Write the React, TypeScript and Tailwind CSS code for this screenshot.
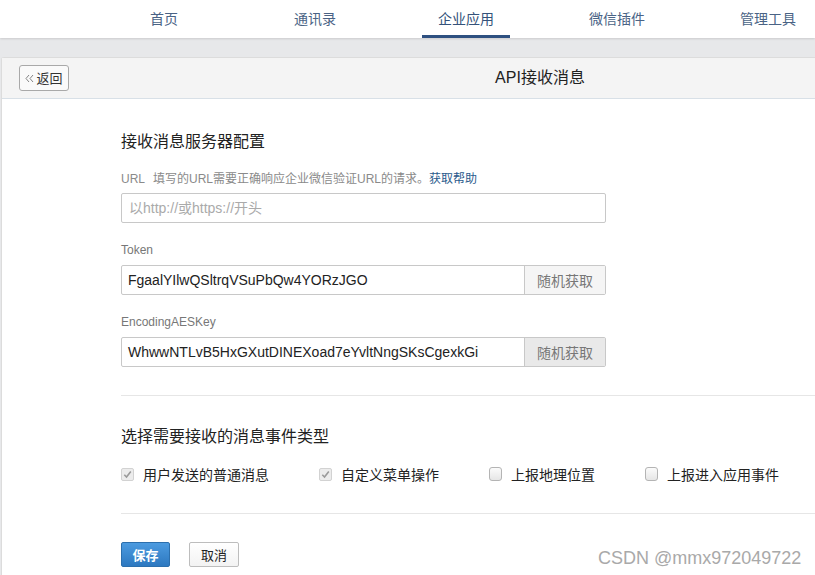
import React from "react";

const FONT = { fontFamily: '"Liberation Sans", "Noto Sans CJK SC", sans-serif' };
const CJK = { fontFamily: '"Noto Sans CJK SC", "Liberation Sans", sans-serif' };

function Check({ checked }: { checked: boolean }) {
  if (checked) {
    return (
      <span className="flex h-[13px] w-[13px] items-center justify-center rounded-[2px] border border-[#d2d2d2] bg-[#ececec]">
        <svg width="9" height="9" viewBox="0 0 9 9">
          <path d="M1.3 4.8 L3.5 7 L7.8 1.6" fill="none" stroke="#9a9a9a" strokeWidth="1.6" />
        </svg>
      </span>
    );
  }
  return (
    <span className="h-[14px] w-[13px] rounded-[3px] border border-[#b4b4b4] bg-gradient-to-b from-[#fbfbfb] to-[#e6e6e6]" />
  );
}

export default function App() {
  const tabs = ["首页", "通讯录", "企业应用", "微信插件", "管理工具"];
  const events: [string, boolean][] = [
    ["用户发送的普通消息", true],
    ["自定义菜单操作", true],
    ["上报地理位置", false],
    ["上报进入应用事件", false],
  ];
  return (
    <div className="relative h-[575px] w-[815px] overflow-hidden bg-[#e7e8ea]" style={FONT}>
      {/* top nav */}
      <div className="flex h-[38px] gap-[63px] bg-white pl-[120px] shadow-[0_1px_2px_rgba(0,0,0,0.12)]">
        {tabs.map((t, i) => (
          <div
            key={t}
            className={`flex w-[88px] shrink-0 items-center justify-center border-b-[3px] pt-[2px] text-[14px] ${
              i === 2 ? "border-[#2e5080] text-[#34527a]" : "border-transparent text-[#4a6385]"
            }`}
            style={CJK}
          >
            {t}
          </div>
        ))}
      </div>

      {/* panel */}
      <div className="ml-[1px] mt-[19px] w-[1060px] rounded-tl-[3px] border-l border-t border-[#dcdcdc] bg-white">
        <div className="grid h-[41px] grid-cols-[1fr_auto_1fr] items-center border-b border-[#d8e0e7] bg-[#f4f4f4] pl-[17px]">
          <div>
            <button className="flex h-[26px] w-[50px] items-center justify-center gap-[2px] rounded-[3px] border border-[#a9a9a9] bg-[#fafafa] text-[13px] text-[#333]" style={CJK}>
              <svg width="9" height="9" viewBox="0 0 9 9">
                <path d="M4 1 L1 4.5 L4 8 M8 1 L5 4.5 L8 8" fill="none" stroke="#777" strokeWidth="0.9" />
              </svg>
              返回
            </button>
          </div>
          <div className="text-[16px] text-[#222]">API接收消息</div>
          <div />
        </div>

        <div className="pb-[60px] pl-[119px]">
          <div className="pt-[29px] text-[16px] leading-[24px] text-[#222]" style={CJK}>接收消息服务器配置</div>
          <div className="mt-[17px] flex items-baseline text-[12px] leading-[20px] text-[#8a8a8a]">
            <span>URL</span>
            <span className="ml-[8px]">填写的URL需要正确响应企业微信验证URL的请求。</span>
            <span className="text-[#2a5a8c]">获取帮助</span>
          </div>
          <div className="mt-[4px] flex h-[30px] w-[485px] items-center rounded-[2px] border border-[#c8c8c8] pl-[7px] text-[14px] text-[#aaa]">
            以http://或https://开头
          </div>

          <div className="mt-[18px] text-[12px] leading-[18px] text-[#777]">Token</div>
          <div className="mt-[6px] flex h-[30px] w-[485px] rounded-[2px] border border-[#c8c8c8]">
            <div className="flex flex-1 items-center pl-[6px] text-[14px] text-[#222]">FgaalYIlwQSltrqVSuPbQw4YORzJGO</div>
            <div className="flex w-[81px] items-center justify-center border-l border-[#c8c8c8] bg-[#f5f5f5] text-[14px] text-[#777]" style={CJK}>随机获取</div>
          </div>

          <div className="mt-[18px] text-[12px] leading-[18px] text-[#777]">EncodingAESKey</div>
          <div className="mt-[6px] flex h-[30px] w-[485px] rounded-[2px] border border-[#c8c8c8]">
            <div className="flex flex-1 items-center pl-[6px] text-[14px] text-[#222]">WhwwNTLvB5HxGXutDINEXoad7eYvltNngSKsCgexkGi</div>
            <div className="flex w-[81px] items-center justify-center border-l border-[#c8c8c8] bg-[#e9e9e9] text-[14px] text-[#777]" style={CJK}>随机获取</div>
          </div>

          <div className="mt-[28px] h-px bg-[#e6e6e6]" />

          <div className="mt-[27px] text-[16px] leading-[24px] text-[#222]" style={CJK}>选择需要接收的消息事件类型</div>
          <div className="mt-[17px] flex h-[20px] items-center gap-[50px]">
            {events.map(([label, c]) => (
              <div key={label} className="flex items-center gap-[9px]">
                <Check checked={c} />
                <span className="text-[14px] leading-[20px] text-[#222]" style={CJK}>{label}</span>
              </div>
            ))}
          </div>

          <div className="mt-[29px] h-px bg-[#e6e6e6]" />

          <div className="mt-[28px] flex gap-[19px]">
            <button className="flex h-[25px] w-[49px] items-center justify-center rounded-[2px] border border-[#2c6fad] bg-gradient-to-b from-[#4c9be0] to-[#2d78c0] text-[13px] font-bold text-white" style={CJK}>
              保存
            </button>
            <button className="flex h-[25px] w-[50px] items-center justify-center rounded-[2px] border border-[#bdbdbd] bg-gradient-to-b from-white to-[#f3f3f3] text-[13px] text-[#222]" style={CJK}>
              取消
            </button>
          </div>
        </div>
      </div>

      <div className="absolute left-[598px] top-[547px] text-[18px] leading-[22px] text-[#a9a9a9]">CSDN @mmx972049722</div>
    </div>
  );
}
